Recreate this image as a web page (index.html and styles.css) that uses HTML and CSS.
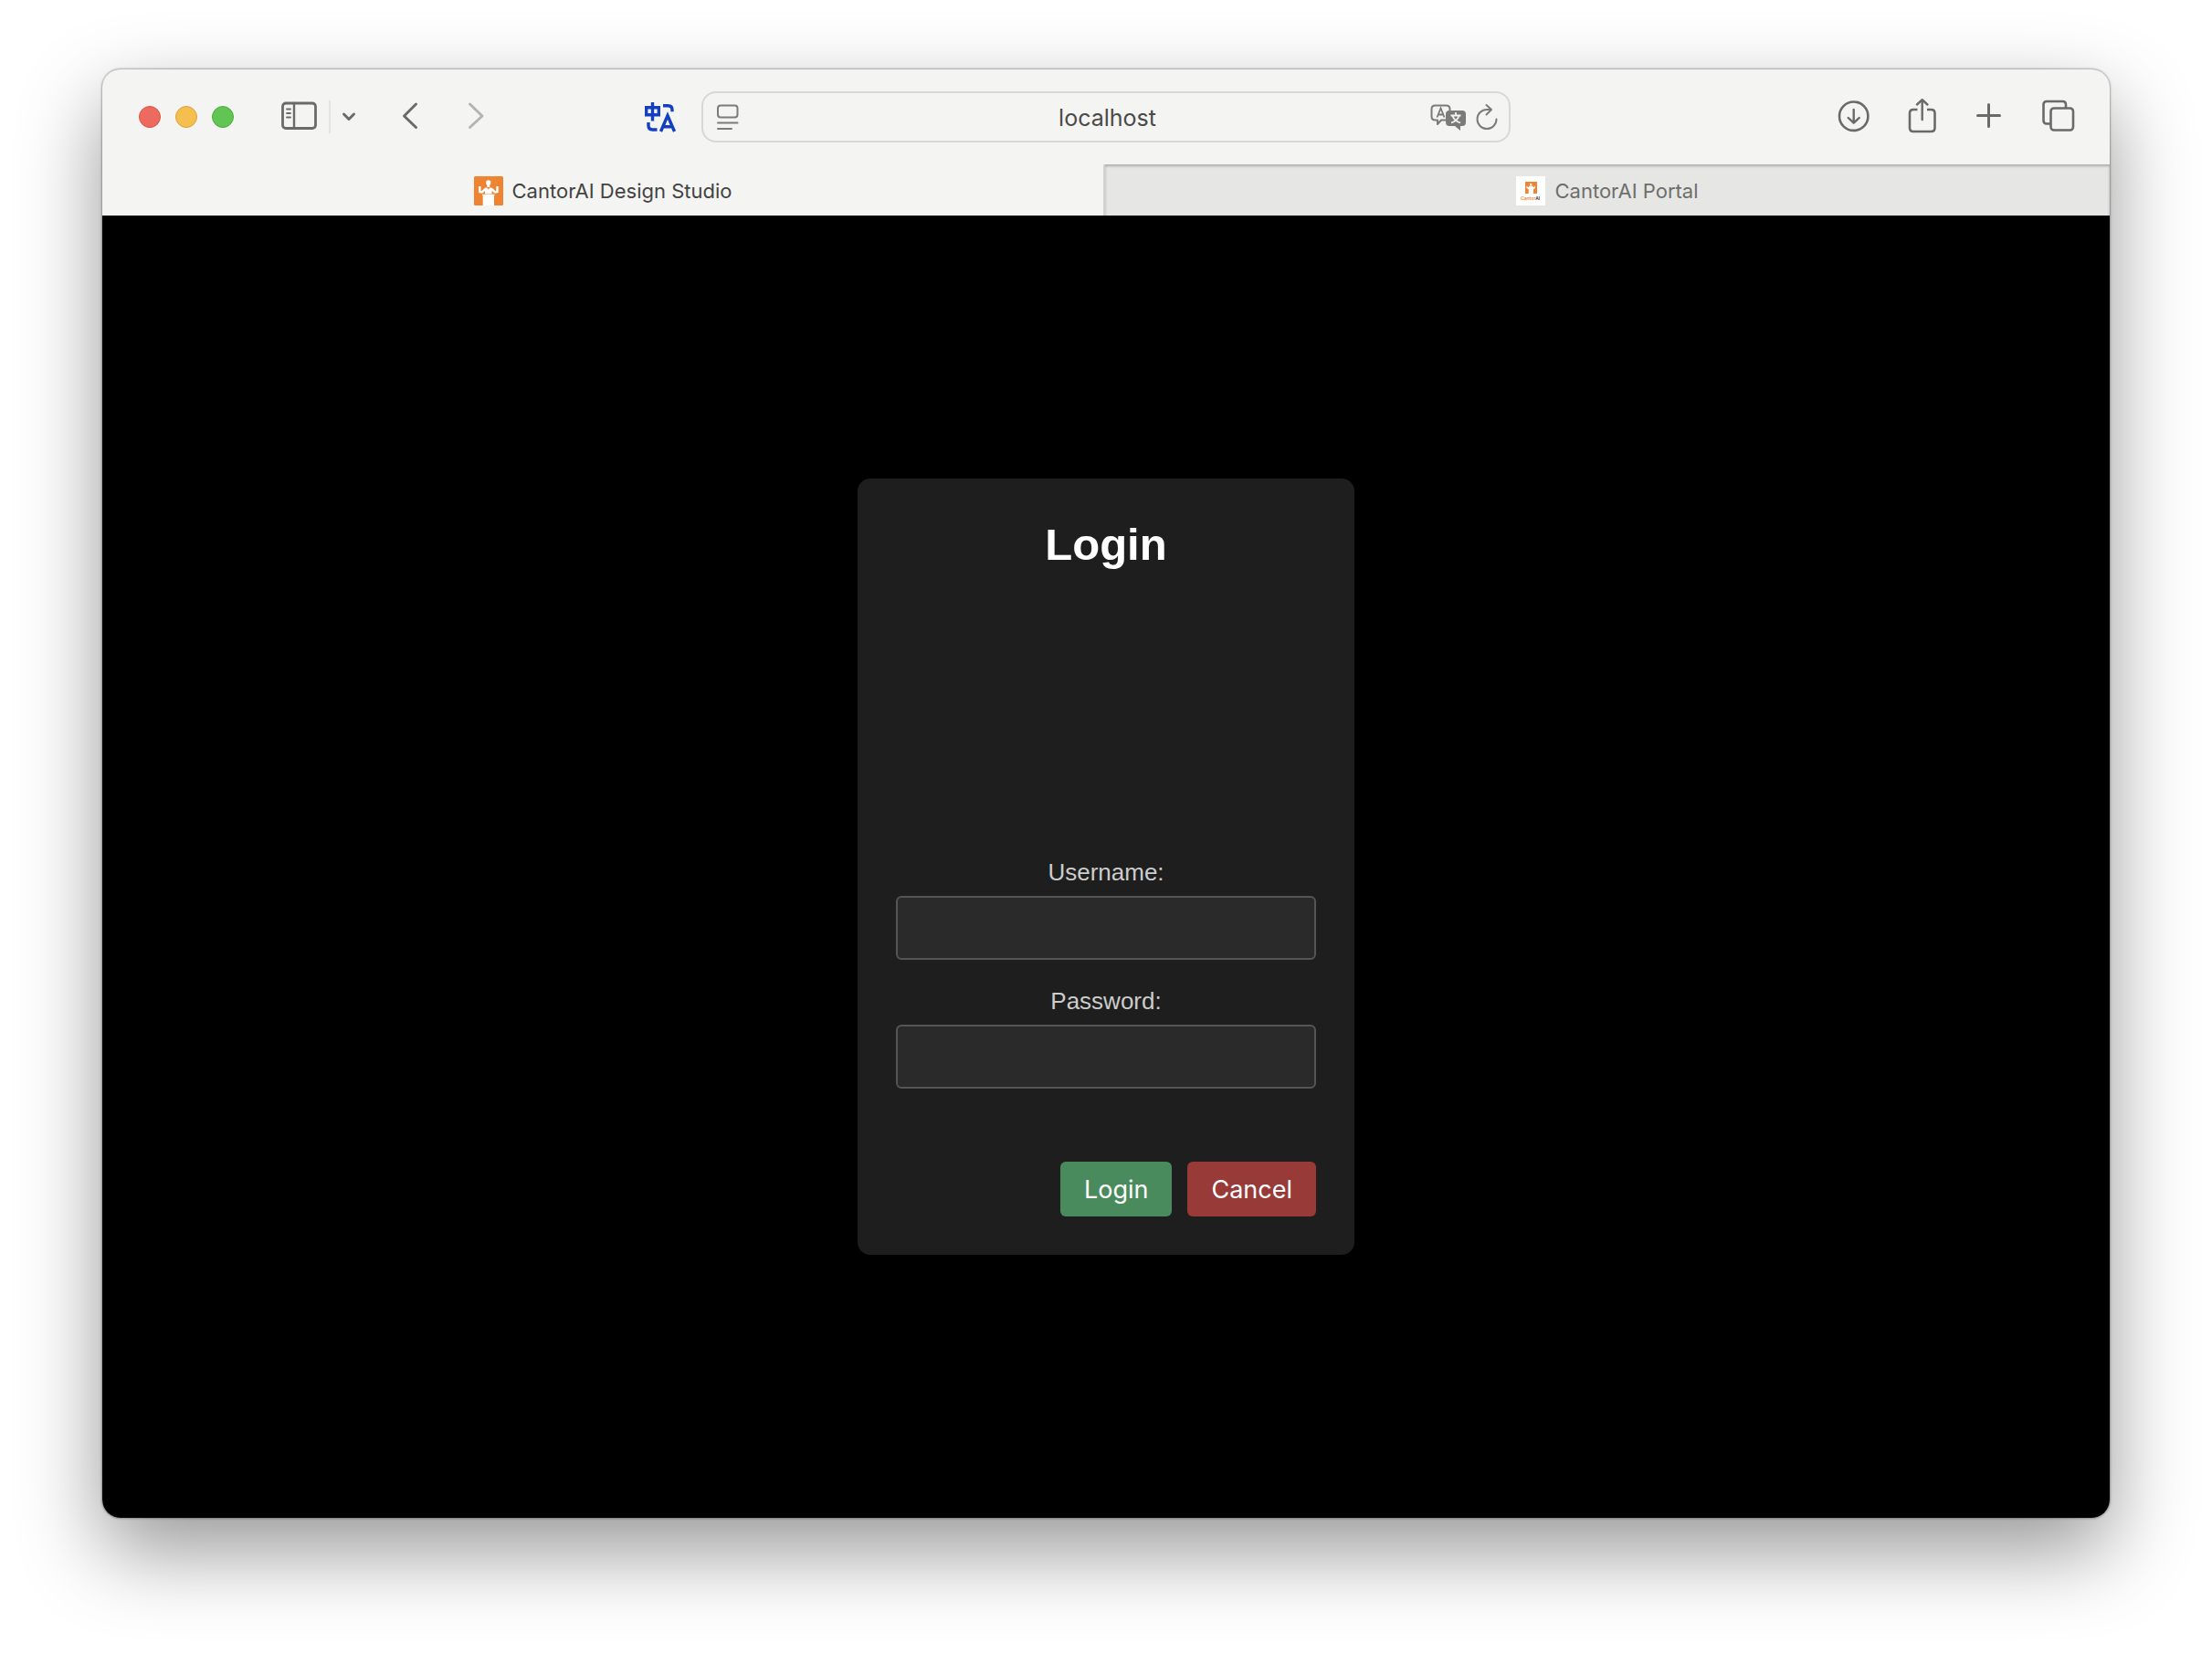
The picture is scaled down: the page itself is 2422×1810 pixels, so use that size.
FILE: index.html
```html
<!DOCTYPE html>
<html lang="en">
<head>
<meta charset="utf-8">
<meta name="viewport" content="width=device-width, initial-scale=1">
<title>CantorAI Design Studio</title>
<link rel="stylesheet" href="styles.css">
</head>
<body>
<div class="window">
  <header class="toolbar">
    <div class="tools tools-left">
      <div class="lights">
        <button class="light light-close" aria-label="Close"></button>
        <button class="light light-min" aria-label="Minimize"></button>
        <button class="light light-max" aria-label="Zoom"></button>
      </div>
      <div class="sidebar-tools">
        <button class="icon-button" aria-label="Show sidebar">
          <svg class="icon" viewBox="0 0 40 40"><g fill="none" stroke="currentColor" stroke-linecap="round"><rect x="1.5" y="5" width="36" height="27.500" rx="3.500" stroke-width="2.800"/><path d="M14 5v27.500" stroke-width="2.400"/><path d="M6 11.500h4M6 16h4M6 20.500h4" stroke-width="1.800"/></g></svg>
        </button>
        <span class="divider"></span>
        <button class="icon-button narrow" aria-label="Tab groups">
          <svg class="icon" viewBox="0 0 16 40"><path d="M2.500 17l5.500 5.500 5.500-5.500" fill="none" stroke="currentColor" stroke-width="3" stroke-linecap="round" stroke-linejoin="round"/></svg>
        </button>
      </div>
      <div class="nav-tools">
        <button class="icon-button" aria-label="Back">
          <svg class="icon" viewBox="0 0 40 40"><path d="M26.500 6L13.500 19l13 12.500" fill="none" stroke="currentColor" stroke-width="3" stroke-linecap="round" stroke-linejoin="round"/></svg>
        </button>
        <button class="icon-button muted" aria-label="Forward">
          <svg class="icon" viewBox="0 0 40 40"><path d="M13.500 6l13.500 13-13.500 12.500" fill="none" stroke="currentColor" stroke-width="3" stroke-linecap="round" stroke-linejoin="round"/></svg>
        </button>
      </div>
      <button class="icon-button translate" aria-label="Translate extension">
        <svg class="icon" viewBox="0 0 40 40"><g fill="none" stroke="currentColor" stroke-width="3.400"><path d="M4.700 9.700h13.600v8H4.700zM11.500 4v20.500"/><path d="M23 7.700h5.500q4.500 0 4.500 4.500v2"/><path d="M7 26v3.500q0 4.500 4.500 4.500H16.500"/><path d="M20.500 36L28 18.500 35.500 36M23 30.700h10"/></g></svg>
      </button>
    </div>

    <div class="address">
      <button class="icon-button small" aria-label="Page settings">
        <svg class="icon" viewBox="0 0 24 40"><g fill="none" stroke="currentColor" stroke-width="2" stroke-linecap="round"><rect x="1" y="7.500" width="21.500" height="13" rx="3"/><path d="M1 26.500h21.500M1 33h15"/></g></svg>
      </button>
      <input class="address-field" type="text" value="localhost" aria-label="Address">
      <div class="address-tools">
        <button class="icon-button" aria-label="Translate page">
          <svg class="icon" viewBox="0 0 40 40"><path d="M17.500 23.500H12l-4 4.500v-4.500H5.500q-4 0-4-4v-8q0-4 4-4h12q4 0 4 4v2" fill="none" stroke="currentColor" stroke-width="2" stroke-linejoin="round"/><path d="M7.500 20.500l4-10 4 10M9 17.500h5" fill="none" stroke="currentColor" stroke-width="1.800"/><path d="M21 13h14q4 0 4 4v9q0 4-4 4h-2v5l-6-5h-6q-4 0-4-4v-9q0-4 4-4z" fill="currentColor"/><path d="M28 15v3.500M22.500 18.500h11M24.500 19q2 5.500 8.500 7.500M31.500 19q-2 5.500-8.500 7.500" fill="none" stroke="#f4f4f2" stroke-width="1.800"/></svg>
        </button>
        <button class="icon-button small" aria-label="Reload">
          <svg class="icon" viewBox="0 0 24 40"><path d="M22.500 22.500a10.500 10.500 0 1 1-10.500-10.500h4M11.500 7l5.500 5-5.500 5.500" fill="none" stroke="currentColor" stroke-width="2" stroke-linecap="round" stroke-linejoin="round"/></svg>
        </button>
      </div>
    </div>

    <div class="tools tools-right">
      <button class="icon-button" aria-label="Downloads">
        <svg class="icon" viewBox="0 0 40 40"><g fill="none" stroke="currentColor" stroke-width="2.600" stroke-linecap="round" stroke-linejoin="round"><circle cx="19.700" cy="19.200" r="15.700"/><path d="M19.700 12v14.500M13.700 21l6 5.700 6-5.700" stroke-width="2.400"/></g></svg>
      </button>
      <button class="icon-button" aria-label="Share">
        <svg class="icon" viewBox="0 0 40 40"><g fill="none" stroke="currentColor" stroke-width="2.600" stroke-linecap="round" stroke-linejoin="round"><path d="M15.500 12H11q-4 0-4 4v16q0 4 4 4h19.500q4 0 4-4V16q0-4-4-4H26" stroke-linecap="butt"/><path d="M20.700 23V1.700M15 6.500l5.700-5.300 5.700 5.300" stroke-width="2.400"/></g></svg>
      </button>
      <button class="icon-button" aria-label="New tab">
        <svg class="icon" viewBox="0 0 40 40"><path d="M7.500 18.500h24M19.500 6.500v24" fill="none" stroke="currentColor" stroke-width="3" stroke-linecap="round"/></svg>
      </button>
      <button class="icon-button" aria-label="Tab overview">
        <svg class="icon" viewBox="0 0 40 40"><g fill="none" stroke="currentColor" stroke-width="2.600"><rect x="13.500" y="10.500" width="24.500" height="24" rx="3.500"/><path d="M13.500 27.500H9q-3.500 0-3.500-3.500V6.500Q5.500 3 9 3h17.500Q30 3 30 6.500v4"/></g></svg>
      </button>
    </div>
  </header>

  <nav class="tabs">
    <a class="tab" href="#studio" aria-current="page">
      <svg class="favicon" viewBox="0 0 32 32"><rect width="32" height="32" rx="1.500" fill="#ee8432"/><circle cx="15.800" cy="7" r="2.700" fill="#fff"/><path d="M14.300 9h3v3h-3zM12 13l2-.8 1.800 2.300 1.800-2.300 2 .8v6.300h-7.600zM9 19.700h13.500v1.300H22v11H9.700V21H9z" fill="#fff"/><path d="M6.300 11v6l2.400.5 4.300-4M25.500 11v6l-2.400.5-4.300-4" fill="none" stroke="#fff" stroke-width="2.400"/></svg>
      <span>CantorAI Design Studio</span>
    </a>
    <a class="tab tab-inactive" href="#portal">
      <svg class="favicon" viewBox="0 0 32 32"><rect width="32" height="32" fill="#fff"/><rect x="10" y="6" width="13" height="13" fill="#ee8432"/><g fill="#fff"><circle cx="16.200" cy="9" r="1.200"/><path d="M13.700 19v-4.700L11.500 13V10.300l1.500 2 1.900-1.800h2.800l1.800 1.800 1.500-2V13l-2 1.300V19z"/></g><text class="favicon-text" x="5" y="26" fill="#ee8432">Cantor<tspan fill="#333">AI</tspan></text></svg>
      <span>CantorAI Portal</span>
    </a>
  </nav>

  <main class="page">
    <form class="login">
      <h1 class="login-title">Login</h1>
      <div class="fields">
        <div class="field">
          <label for="username">Username:</label>
          <input id="username" type="text">
        </div>
        <div class="field">
          <label for="password">Password:</label>
          <input id="password" type="password">
        </div>
      </div>
      <div class="actions">
        <button class="action action-login" type="button">Login</button>
        <button class="action action-cancel" type="button">Cancel</button>
      </div>
    </form>
  </main>
</div>
</body>
</html>
```
FILE: styles.css
```css
* {
  box-sizing: border-box;
}

body {
  margin: 0;
  min-height: 100vh;
  display: flex;
  padding: 76px 112px 148px;
  background: #fff;
  font-family: Inter, "Liberation Sans", sans-serif;
}

button,
input {
  margin: 0;
  padding: 0;
  border: 0;
  background: none;
  font: inherit;
  color: inherit;
}

/* Browser window */
.window {
  flex: 1;
  min-width: 0;
  display: flex;
  flex-direction: column;
  overflow: hidden;
  border-radius: 20px;
  background: #f4f4f2;
  box-shadow: 0 0 2px 1px rgba(0, 0, 0, 0.3), 0 36px 90px rgba(0, 0, 0, 0.41);
}

.toolbar {
  display: grid;
  grid-template-columns: 1fr minmax(0, 886px) 1fr;
  align-items: center;
  height: 104px;
  color: #6a6a68;
}

.tools {
  display: flex;
  align-items: center;
}

.tools-left {
  padding: 0 25px 0 40px;
}

.tools-right {
  justify-content: flex-end;
  gap: 34px;
  padding-right: 38px;
}

.lights {
  display: flex;
  gap: 16px;
}

.light {
  width: 24px;
  height: 24px;
  border-radius: 50%;
  border: 1px solid;
}

.light-close {
  background: #ec6a5e;
  border-color: #d6544a;
}

.light-min {
  background: #f4bf4f;
  border-color: #d9a140;
}

.light-max {
  background: #61c554;
  border-color: #4faa41;
}

.sidebar-tools {
  display: flex;
  align-items: center;
  gap: 12px;
  margin-left: 52px;
}

.divider {
  width: 2px;
  height: 36px;
  background: #e4e4e2;
}

.nav-tools {
  display: flex;
  gap: 32px;
  margin-left: 39px;
}

.icon-button {
  display: block;
  flex: none;
  width: 40px;
  height: 40px;
}

.narrow {
  width: 16px;
}

.small {
  width: 24px;
}

.muted {
  color: #b4b4b2;
}

.translate {
  margin-left: auto;
  color: #143fc0;
}

.icon {
  display: block;
  width: 100%;
  height: 100%;
}

.address {
  display: grid;
  grid-template-columns: 1fr minmax(0, 400px) 1fr;
  align-items: center;
  height: 56px;
  padding: 0 12px 0 15px;
  border: 2px solid #d8d8d6;
  border-radius: 16px;
  color: #7b7b79;
}

.address-field {
  width: 100%;
  height: 40px;
  padding-top: 2px;
  font-size: 25px;
  text-align: center;
  color: #4a4a49;
}

.address-tools {
  display: flex;
  justify-content: flex-end;
  gap: 10px;
}

/* Tab bar */
.tabs {
  display: grid;
  grid-template-columns: 1096fr 1102fr;
  height: 56px;
}

.tab {
  display: flex;
  align-items: center;
  justify-content: center;
  gap: 10px;
  padding-top: 2px;
  font-size: 22px;
  line-height: 28px;
  color: #434342;
  text-decoration: none;
}

.tab-inactive {
  border-left: 2px solid #d2d2d0;
  background: #e6e6e4;
  box-shadow: inset 0 2px 3px rgba(0, 0, 0, 0.25);
  color: #6e6e6c;
}

.favicon {
  flex: none;
  width: 32px;
  height: 32px;
}

.favicon-text {
  font-size: 5px;
  font-weight: 600;
}

/* Login page */
.page {
  flex: 1;
  display: flex;
  align-items: center;
  justify-content: center;
  background: #000;
  font-family: "Liberation Sans", Arial, sans-serif;
}

.login {
  width: 544px;
  padding: 42px;
  border-radius: 14px;
  background: #1e1e1e;
}

.login-title {
  margin: 0 0 314px;
  font-size: 49px;
  line-height: 60px;
  text-align: center;
  color: #fff;
}

.fields {
  display: grid;
  gap: 30px;
}

.field {
  display: grid;
  gap: 10px;
  font-size: 26px;
  line-height: 31px;
  text-align: center;
  color: #ccc;
}

.field input {
  width: 100%;
  height: 70px;
  padding: 0 20px;
  border: 2px solid #555;
  border-radius: 6px;
  background: #2a2a2a;
  text-align: left;
}

.actions {
  display: flex;
  justify-content: flex-end;
  gap: 17px;
  margin-top: 80px;
}

.action {
  height: 60px;
  padding: 0 26px;
  border-radius: 6px;
  font-family: Inter, sans-serif;
  font-size: 27px;
  color: #fff;
}

.action-login {
  background: #4a8b5d;
}

.action-cancel {
  background: #983a37;
}
```
